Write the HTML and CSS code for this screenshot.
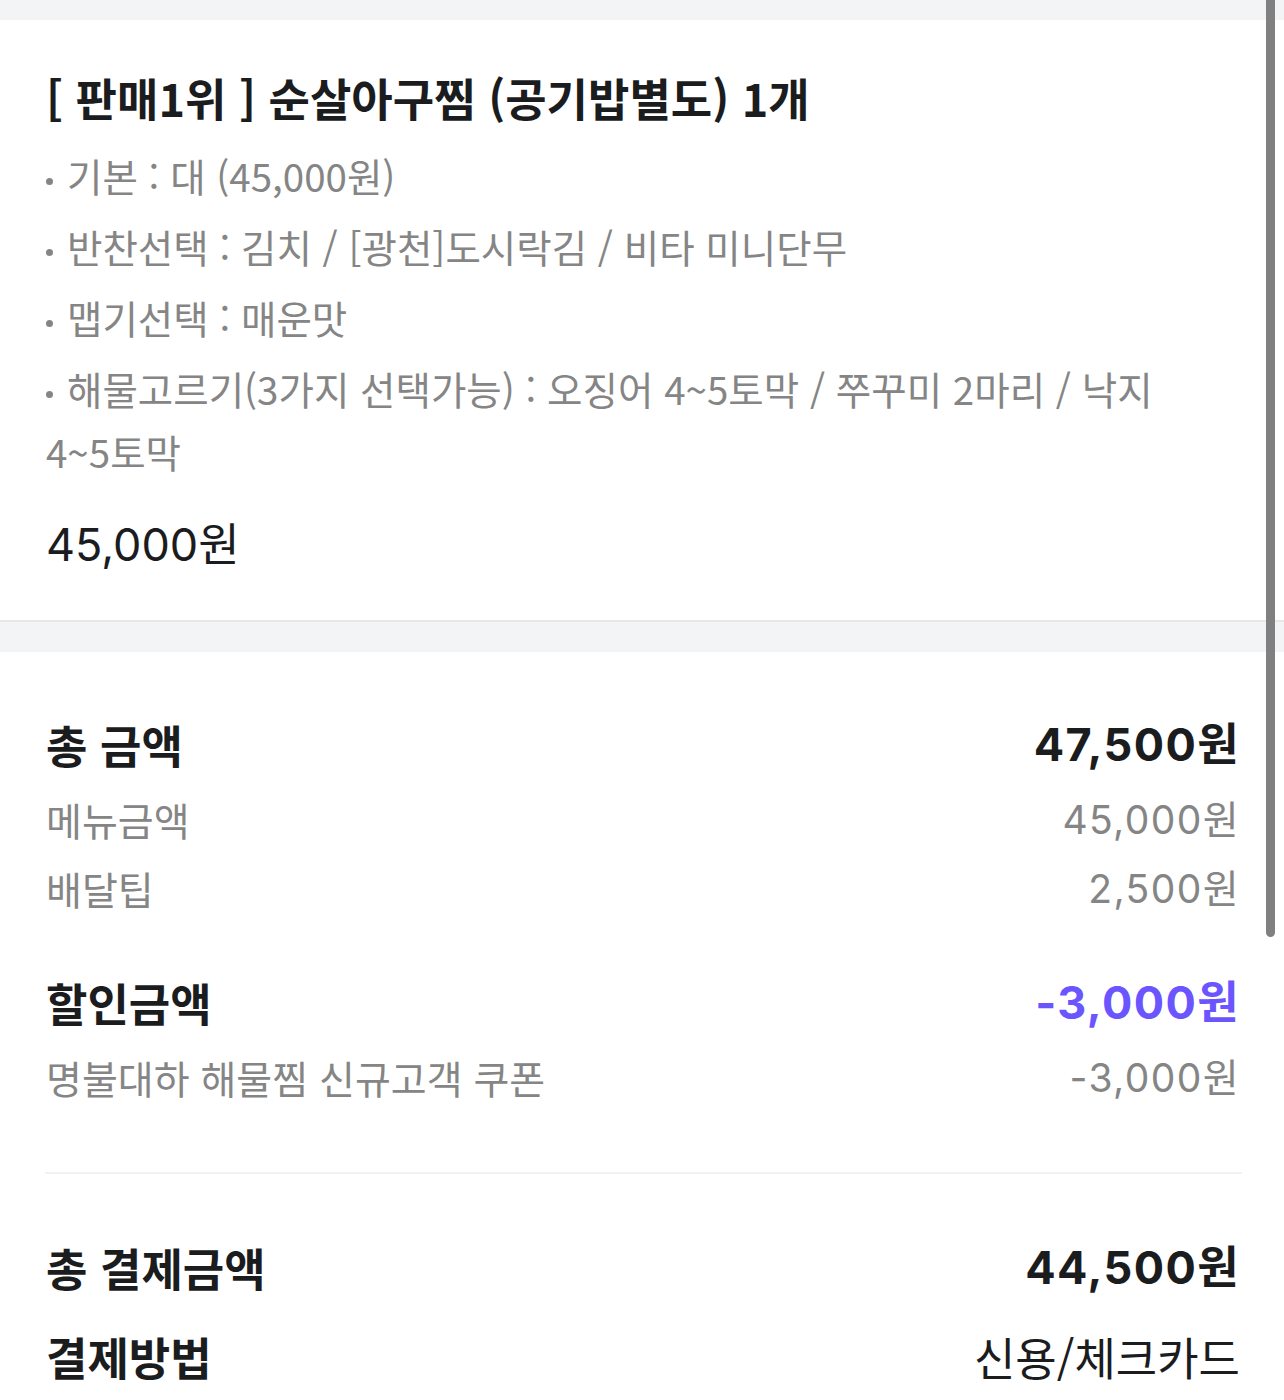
FILE: index.html
```html
<!DOCTYPE html>
<html lang="ko">
<head>
<meta charset="utf-8">
<link rel="stylesheet" href="styles.css">
</head>
<body>
<div class="band-top"></div>
<section class="menu-card">
  <h1 class="menu-title">[ 판매1위 ] 순살아구찜 (공기밥별도) 1개</h1>
  <ul class="options">
    <li>기본 : 대 (45,000원)</li>
    <li>반찬선택 : 김치 / [광천]도시락김 / 비타 미니단무</li>
    <li>맵기선택 : 매운맛</li>
    <li>해물고르기(3가지 선택가능) : 오징어 4~5토막 / 쭈꾸미 2마리 / 낙지 4~5토막</li>
  </ul>
  <div class="menu-price">45,000원</div>
</section>
<div class="band-gap"></div>
<section class="summary">
  <div class="row head"><span>총 금액</span><span class="num">47,500원</span></div>
  <div class="row sub"><span>메뉴금액</span><span class="num">45,000원</span></div>
  <div class="row sub"><span>배달팁</span><span class="num">2,500원</span></div>
  <div class="row head discount"><span>할인금액</span><span class="num accent">-3,000원</span></div>
  <div class="row sub"><span>명불대하 해물찜 신규고객 쿠폰</span><span class="num">-3,000원</span></div>
  <hr class="divider">
  <div class="row head pay-total"><span>총 결제금액</span><span class="num">44,500원</span></div>
  <div class="row head pay-method"><span>결제방법</span><span class="method">신용/체크카드</span></div>
</section>
<div class="scrollbar"></div>
</body>
</html>
```
FILE: styles.css
```css
html, body {
  margin: 0;
  padding: 0;
  background: #ffffff;
  font-family: "Noto Sans CJK KR", sans-serif;
  color: #1b1c1e;
  overflow: hidden;
}
.band-top {
  height: 20px;
  background: #f3f4f6;
}
.menu-card {
  padding: 50px 46px 47px 46px;
  border-bottom: 2px solid #e6e7e9;
}
.menu-title {
  margin: 0;
  font-size: 45px;
  line-height: 56px;
  font-weight: 700;
}
.options {
  list-style: none;
  margin: 18px 0 0 0;
  padding: 0;
  color: #858585;
  font-size: 38.5px;
  line-height: 63px;
  word-break: keep-all;
  overflow-wrap: break-word;
}
.options li {
  margin-bottom: 8px;
}
.options li:last-child { margin-bottom: 0; }
.options li::before {
  content: "";
  display: inline-block;
  width: 7px;
  height: 7px;
  border-radius: 50%;
  background: #858585;
  margin: 0 14px 0 0;
  vertical-align: middle;
}
.menu-price {
  margin-top: 34px;
  font-size: 45px;
  line-height: 56px;
  font-family: Inter, "Noto Sans CJK KR", sans-serif;
  color: #1b1c1e;
}
.band-gap {
  height: 30px;
  background: #f3f4f6;
}
.summary {
  padding: 65px 44px 40px 46px;
}
.row {
  display: flex;
  justify-content: space-between;
  align-items: center;
}
.row.head {
  font-size: 45px;
  line-height: 56px;
  font-weight: 700;
  color: #1b1c1e;
}
.row.sub {
  font-size: 39px;
  line-height: 69px;
  color: #858585;
}
.row.sub:nth-child(2) { margin-top: 12px; }
.row.discount { margin-top: 52px; }
.row.discount + .row.sub { margin-top: 12px; }
.num {
  font-family: Inter, "Noto Sans CJK KR", sans-serif;
  letter-spacing: 1.4px;
}
.row.head .num { font-weight: 700; }
.accent { color: #6b55ff; }
.divider {
  border: 0;
  height: 2px;
  background: #f2f2f2;
  margin: 60px -2px 66px -1px;
}
.row.pay-method { margin-top: 33px; }
.method {
  font-weight: 400;
  font-size: 45px;
}
.scrollbar {
  position: absolute;
  top: 0;
  left: 1266px;
  width: 9px;
  height: 937px;
  background: #808080;
  border-radius: 0 0 5px 5px;
}
```
